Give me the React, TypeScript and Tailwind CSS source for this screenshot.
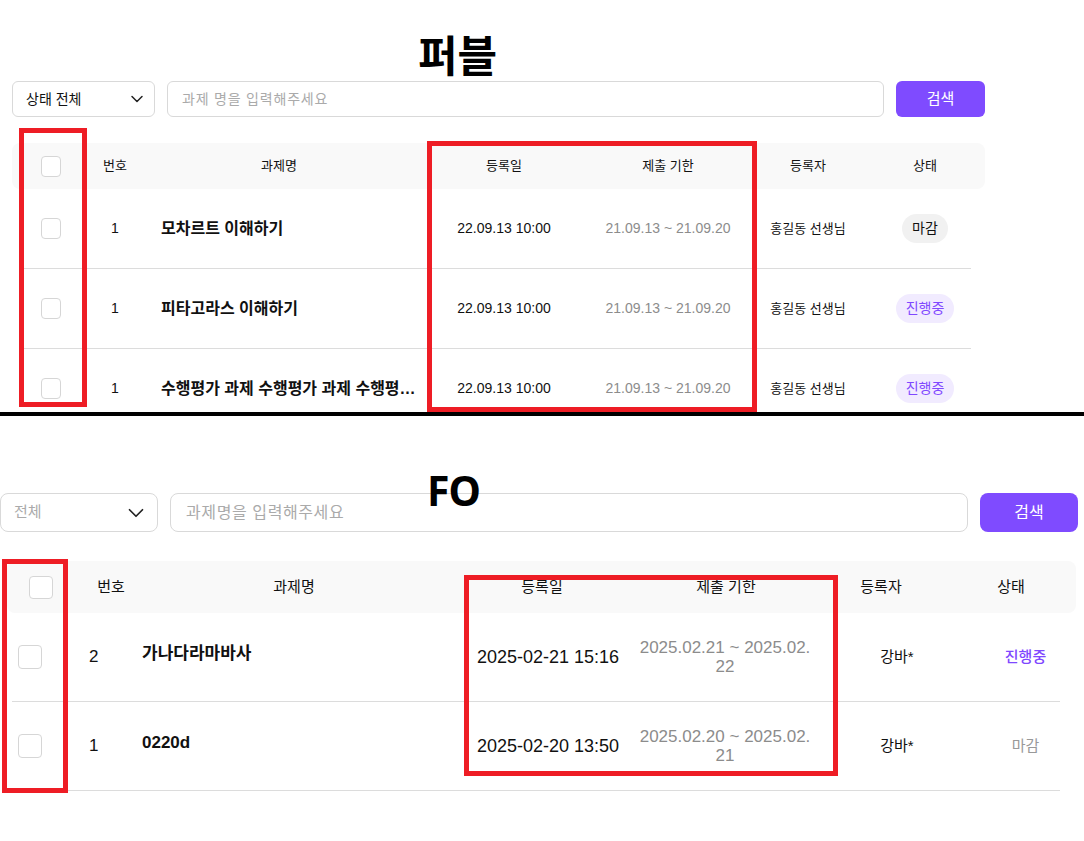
import { ChevronDown } from 'lucide-react';

type PubRow = {
  no: number;
  title: string;
  date: string;
  period: string;
  writer: string;
  status: '마감' | '진행중';
};

type FoRow = {
  no: number;
  title: string;
  date: string;
  period: string;
  writer: string;
  status: '마감' | '진행중';
};

const pubRows: PubRow[] = [
  { no: 1, title: '모차르트 이해하기', date: '22.09.13 10:00', period: '21.09.13 ~ 21.09.20', writer: '홍길동 선생님', status: '마감' },
  { no: 1, title: '피타고라스 이해하기', date: '22.09.13 10:00', period: '21.09.13 ~ 21.09.20', writer: '홍길동 선생님', status: '진행중' },
  { no: 1, title: '수행평가 과제 수행평가 과제 수행평가 과제', date: '22.09.13 10:00', period: '21.09.13 ~ 21.09.20', writer: '홍길동 선생님', status: '진행중' },
];

const foRows: FoRow[] = [
  { no: 2, title: '가나다라마바사', date: '2025-02-21 15:16', period: '2025.02.21 ~ 2025.02.22', writer: '강바*', status: '진행중' },
  { no: 1, title: '0220d', date: '2025-02-20 13:50', period: '2025.02.20 ~ 2025.02.21', writer: '강바*', status: '마감' },
];

const Checkbox = ({ className }: { className: string }) => (
  <div className={`rounded-[4px] border border-[#d6d6d6] bg-white ${className}`} />
);

const PubTable = () => (
  <div className="ml-[12px] mt-[26px] w-[973px]">
    <div className="grid h-[46px] grid-cols-[78px_50px_278px_172px_156px_124px_110px] items-center rounded-lg bg-[#f9f9f9] text-[13px] text-[#111]">
      <div className="flex justify-center">
        <Checkbox className="h-[21px] w-[20px]" />
      </div>
      <div className="text-center">번호</div>
      <div className="text-center">과제명</div>
      <div className="text-center">등록일</div>
      <div className="text-center">제출 기한</div>
      <div className="text-center">등록자</div>
      <div className="text-center">상태</div>
    </div>
    {pubRows.map((row, i) => (
      <div key={i}>
        <div className="grid h-[79px] grid-cols-[78px_50px_278px_172px_156px_124px_110px] items-center">
          <div className="flex justify-center">
            <Checkbox className="h-[21px] w-[20px]" />
          </div>
          <div className="text-center text-[14px] text-[#111]">{row.no}</div>
          <div className="truncate pl-[21px] pr-[2px] text-[16px] font-bold text-[#111]">{row.title}</div>
          <div className="text-center text-[14px] text-[#111]">{row.date}</div>
          <div className="text-center text-[14px] text-[#8c8c8c]">{row.period}</div>
          <div className="text-center text-[13px] text-[#111]">{row.writer}</div>
          <div className="flex justify-center">
            <span
              className={`flex h-[29px] items-center rounded-full px-[10px] text-[14px] ${
                row.status === '마감' ? 'bg-[#f1f1f1] text-[#111]' : 'bg-[#f1ebff] text-[#8048ff]'
              }`}
            >
              {row.status}
            </span>
          </div>
        </div>
        <div className="ml-[12px] h-px w-[947px] bg-[#dcdcdc]" />
      </div>
    ))}
  </div>
);

const FoTable = () => (
  <div className="mt-[29px]">
    <div className="ml-[7px] grid h-[52px] w-[1069px] grid-cols-[68px_72px_294px_202px_166px_144px_116px] items-center rounded-lg bg-[#f9f9f9] text-[15px] text-[#111]">
      <div className="flex justify-center">
        <Checkbox className="h-[23px] w-[24px]" />
      </div>
      <div className="text-center">번호</div>
      <div className="text-center">과제명</div>
      <div className="text-center">등록일</div>
      <div className="text-center">제출 기한</div>
      <div className="text-center">등록자</div>
      <div className="text-center">상태</div>
    </div>
    {foRows.map((row, i) => (
      <div key={i}>
        <div className="grid h-[88px] grid-cols-[60px_82px_318px_176px_178px_166px_91px] items-center">
          <div className="pl-[18px]">
            <Checkbox className="h-[24px] w-[24px]" />
          </div>
          <div className="pl-[29px] text-[17px] text-[#111]">{row.no}</div>
          <div className="-mt-[6px] text-[17px] font-bold text-[#111]">{row.title}</div>
          <div className="text-center text-[18px] text-[#111]">{row.date}</div>
          <div className="mx-auto w-[175px] break-all text-center text-[17px] leading-[19px] text-[#8c8c8c]">
            {row.period}
          </div>
          <div className="text-center text-[15px] text-[#111]">{row.writer}</div>
          <div
            className={`text-center text-[15px] ${
              row.status === '진행중' ? 'font-medium text-[#8048ff]' : 'text-[#999]'
            }`}
          >
            {row.status}
          </div>
        </div>
        <div className="ml-[12px] h-px w-[1048px] bg-[#dcdcdc]" />
      </div>
    ))}
  </div>
);

export default function App() {
  return (
    <div className="relative h-[841px] w-[1084px] overflow-hidden bg-white font-['Liberation_Sans','Noto_Sans_CJK_KR',sans-serif] text-[#111]">
      {/* 퍼블 */}
      <section className="h-[412px] overflow-hidden">
        <div className="h-[81px] pl-[418px] pt-[32px]">
          <h1 className="font-['Noto_Sans_CJK_KR',sans-serif] text-[43px] font-bold leading-[43px] text-black">퍼블</h1>
        </div>
        <div className="flex h-[36px] gap-[12px] pl-[12px]">
          <div className="flex w-[143px] items-center justify-between rounded-[6px] border border-[#d9d9d9] pl-[13px] pr-[7px] text-[14px] text-[#111]">
            상태 전체
            <ChevronDown size={20} strokeWidth={1.8} className="text-[#222]" />
          </div>
          <div className="flex w-[717px] items-center rounded-[6px] border border-[#d9d9d9] pl-[14px] text-[14px] tracking-[0.8px] text-[#aaa]">
            과제 명을 입력해주세요
          </div>
          <button className="w-[89px] rounded-[6px] bg-[#7f4bff] text-[15px] text-white">검색</button>
        </div>
        <PubTable />
      </section>

      <div className="h-[4px] bg-black" />

      {/* FO */}
      <section>
        <div className="relative z-10 -mb-[18px] mt-[54px] h-[41px] pl-[427px] font-['Noto_Sans',sans-serif] text-[41px] font-bold leading-none tracking-[-1px] text-black">
          FO
        </div>
        <div className="flex h-[39px] gap-[12px]">
          <div className="flex w-[158px] items-center justify-between rounded-[8px] border border-[#d9d9d9] pl-[13px] pr-[8px] text-[15px] text-[#aaa]">
            전체
            <ChevronDown size={26} strokeWidth={1.6} className="text-[#222]" />
          </div>
          <div className="flex w-[798px] items-center rounded-[8px] border border-[#d9d9d9] pl-[15px] text-[16px] tracking-[0.6px] text-[#aaa]">
            과제명을 입력해주세요
          </div>
          <button className="w-[98px] rounded-[8px] bg-[#7f4bff] text-[16px] text-white">검색</button>
        </div>
        <FoTable />
      </section>

      {/* red annotation boxes */}
      <div className="absolute left-[19px] top-[128px] h-[279px] w-[68px] border-[5px] border-[#ee1d25]" />
      <div className="absolute left-[427px] top-[141px] h-[271px] w-[330px] border-[5px] border-[#ee1d25]" />
      <div className="absolute left-[2px] top-[559px] h-[234px] w-[66px] border-[5px] border-[#ee1d25]" />
      <div className="absolute left-[464px] top-[575px] h-[201px] w-[374px] border-[5px] border-[#ee1d25]" />
    </div>
  );
}
